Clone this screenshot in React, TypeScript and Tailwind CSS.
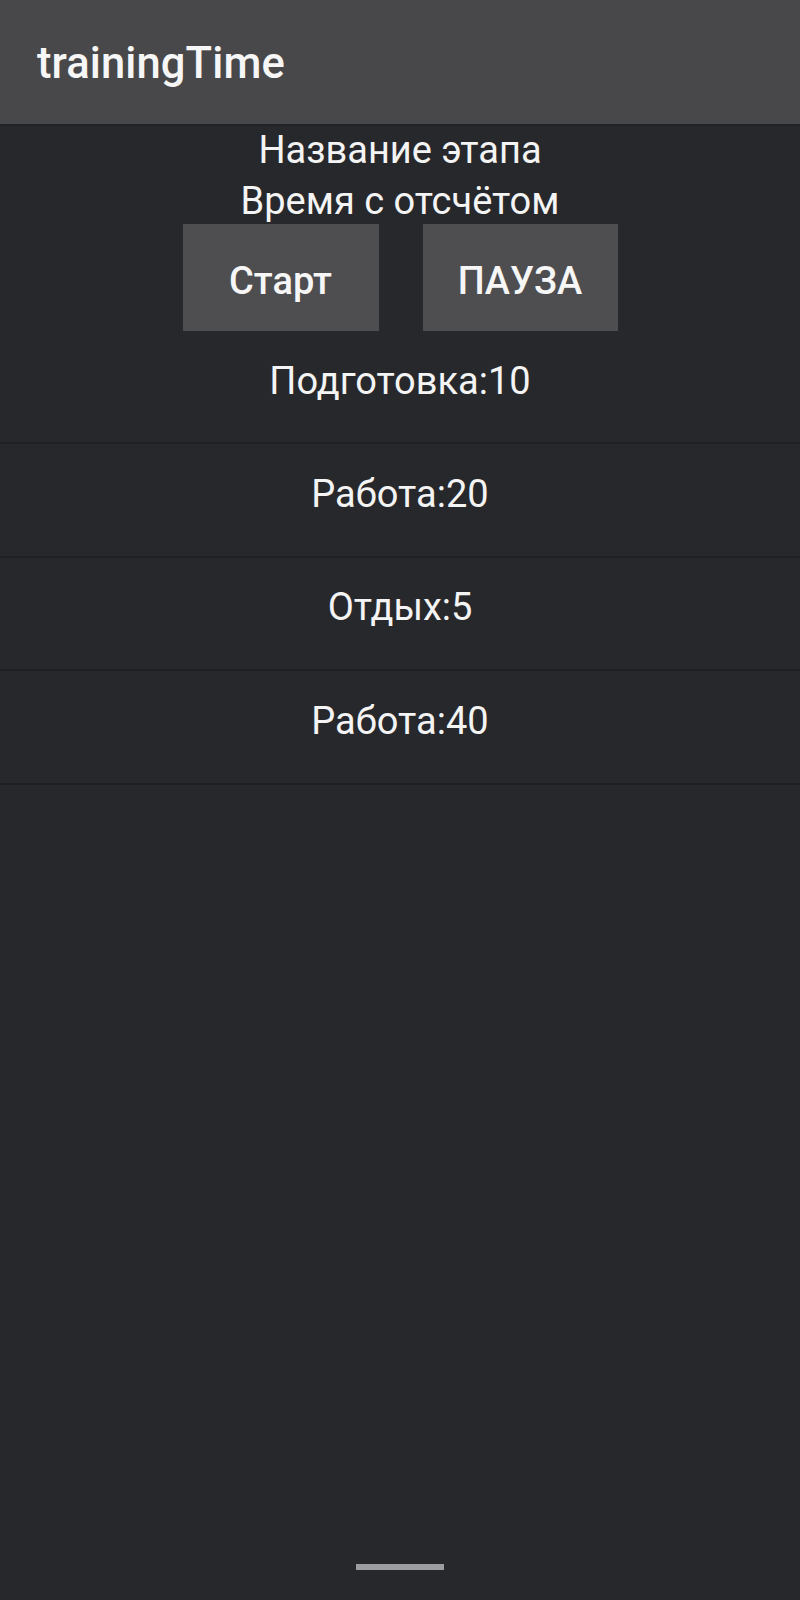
const stages = [
  { name: 'Подготовка', time: 10 },
  { name: 'Работа', time: 20 },
  { name: 'Отдых', time: 5 },
  { name: 'Работа', time: 40 },
];

function StageRow({ name, time }: { name: string; time: number }) {
  return (
    <div className="flex h-[113.4px] items-center justify-center border-b-2 border-[#1f2023] pb-[12px]">
      <span className="text-[38px] leading-none text-[#f4f4f4]">
        {name}:{time}
      </span>
    </div>
  );
}

export default function App() {
  return (
    <div className="flex h-[1600px] w-[800px] flex-col bg-[#27282c] font-['Roboto','Noto_Sans',sans-serif] text-white">
      <header className="flex h-[124px] shrink-0 items-center bg-[#48484a] px-[37px] pt-[4px] shadow-[0_1px_2px_rgba(0,0,0,0.25)]">
        <h1 className="text-[43.5px] font-medium leading-none tracking-[0.1px] text-[#f6f6f6]">trainingTime</h1>
      </header>

      <div className="flex h-[100px] shrink-0 flex-col items-center pt-[1px]">
        <p className="text-[38px] leading-[51px] text-[#f4f4f4]">Название этапа</p>
        <p className="text-[38px] leading-[51px] text-[#f4f4f4]">Время с отсчётом</p>
      </div>

      <div className="relative flex justify-center gap-[44px]">
        <button className="flex h-[107px] w-[196px] items-center justify-center bg-[#4e4e50] pt-[8px] text-[38px] font-medium text-[#f6f6f6]">
          Старт
        </button>
        <button className="flex h-[107px] w-[195px] items-center justify-center bg-[#4e4e50] pt-[8px] text-[38px] font-medium text-[#f6f6f6]">
          ПАУЗА
        </button>
      </div>

      <div className="flex flex-col">
        {stages.map((s, i) => (
          <StageRow key={i} name={s.name} time={s.time} />
        ))}
      </div>

      <div className="mt-auto flex justify-center pb-[30px]">
        <div className="h-[6px] w-[88px] bg-[#9d9d9f]" />
      </div>
    </div>
  );
}
